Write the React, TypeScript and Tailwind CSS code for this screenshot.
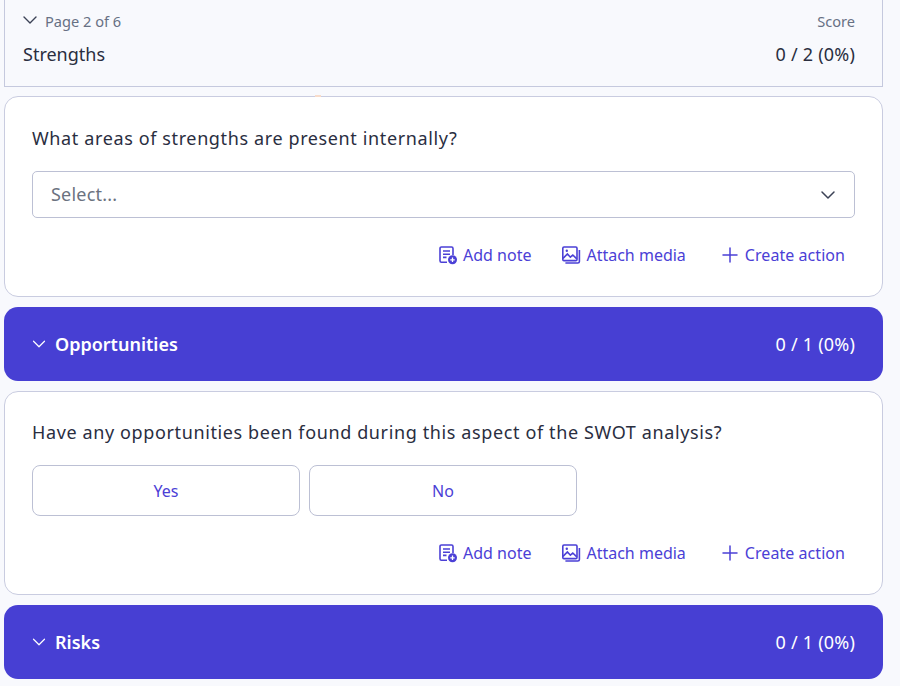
import React from "react";
import { ChevronDown, Plus } from "lucide-react";

const font = "font-['Noto_Sans',sans-serif]";

function NoteIcon() {
  return (
    <svg width="20" height="20" viewBox="0 0 20 20" fill="none" stroke="currentColor" strokeWidth="1.6">
      <path d="M9 17.2H3.4a1.4 1.4 0 0 1-1.4-1.4V3.4A1.4 1.4 0 0 1 3.4 2h10.2A1.4 1.4 0 0 1 15 3.4V10" />
      <path d="M5 6h7M5 9.2h7M5 12.4h3.5" />
      <circle cx="14.5" cy="14.8" r="4.5" fill="currentColor" stroke="none" />
      <path d="M14.5 12.6v4.4M12.3 14.8h4.4" stroke="#fff" strokeWidth="1.3" />
    </svg>
  );
}

function MediaIcon() {
  return (
    <svg width="20" height="20" viewBox="0 0 20 20" fill="none" stroke="currentColor" strokeWidth="1.6">
      <rect x="1.8" y="2" width="14.2" height="13.6" rx="1.2" />
      <path d="M2 13.4 6.4 9l3 3.2 2.4-2.2 4 3.8" />
      <circle cx="5.8" cy="5.8" r="1.2" fill="currentColor" stroke="none" />
      <path d="M18.4 5v11.4a1.6 1.6 0 0 1-1.6 1.6H4.4" />
    </svg>
  );
}

function Actions() {
  return (
    <div className="flex justify-end items-center pr-[10px] text-[16px] leading-[24px] text-[#4b40d6]">
      <div className="flex items-center gap-[5px]">
        <NoteIcon />
        <span>Add note</span>
      </div>
      <div className="flex items-center gap-[5px] ml-[30px]">
        <MediaIcon />
        <span>Attach media</span>
      </div>
      <div className="flex items-center gap-[3px] ml-[32px]">
        <Plus size={24} strokeWidth={1.5} />
        <span className="tracking-[0.05px]">Create action</span>
      </div>
    </div>
  );
}

function Section({ title, score }: { title: string; score: string }) {
  return (
    <div className="h-[74px] rounded-[14px] bg-[#473fd3] flex items-center justify-between pl-[24px] pr-[28px] text-white">
      <div className="flex items-center gap-[5px]">
        <ChevronDown size={22} strokeWidth={1.3} />
        <span className="text-[18px] font-semibold">{title}</span>
      </div>
      <span className="text-[18px] tracking-[0.2px]">{score}</span>
    </div>
  );
}

export default function App() {
  return (
    <div className={`${font} h-[686px] overflow-hidden bg-[#f8f9fd] pl-[4px] pr-[17px] text-[#2a2e3f]`}>
      <div className="h-[87px] border-x border-b border-[#c5c9de] pl-[18px] pr-[27px] pt-[11px] mb-[9px]">
        <div className="flex justify-between items-center h-[22px] text-[14.6px] text-[#677084]">
          <div className="flex items-center gap-[3px] -ml-[5px]">
            <ChevronDown size={24} strokeWidth={1.4} className="text-[#3c4256] -mt-[3px]" />
            <span>Page 2 of 6</span>
          </div>
          <span>Score</span>
        </div>
        <div className="flex justify-between items-center mt-[7px] text-[18px] leading-[28px]">
          <span>Strengths</span>
          <span className="tracking-[0.2px]">0 / 2 (0%)</span>
        </div>
      </div>

      <div className="flex flex-col gap-[10px]">
        <div className="relative h-[201px] rounded-[14px] border border-[#c9cce0] bg-white px-[27px] pt-[27px]">
          <span className="absolute -top-[2px] left-[310px] w-[6px] h-[2px] bg-[#f8dccb]" />
          <div className="text-[18px] leading-[28px] tracking-[0.62px]">What areas of strengths are present internally?</div>
          <div className="mt-[19px] h-[47px] rounded-[5px] border border-[#bcc0d4] flex items-center justify-between pl-[18px] pr-[14px] text-[18px] text-[#6b7280]">
            <span className="tracking-[0.2px]">Select...</span>
            <ChevronDown size={24} strokeWidth={1.5} className="text-[#3c4256]" />
          </div>
          <div className="mt-[25px]">
            <Actions />
          </div>
        </div>

        <Section title="Opportunities" score="0 / 1 (0%)" />

        <div className="h-[204px] rounded-[14px] border border-[#c9cce0] bg-white px-[27px] pt-[26px]">
          <div className="text-[18px] leading-[28px] tracking-[0.62px]">
            Have any opportunities been found during this aspect of the SWOT analysis?
          </div>
          <div className="mt-[19px] flex gap-[9px]">
            <div className="w-[268px] h-[51px] rounded-[8px] border border-[#bcc0d4] flex items-center justify-center text-[16px] text-[#4b40d6]">Yes</div>
            <div className="w-[268px] h-[51px] rounded-[8px] border border-[#bcc0d4] flex items-center justify-center text-[16px] text-[#4b40d6]">No</div>
          </div>
          <div className="mt-[25px]">
            <Actions />
          </div>
        </div>

        <Section title="Risks" score="0 / 1 (0%)" />
      </div>
    </div>
  );
}
